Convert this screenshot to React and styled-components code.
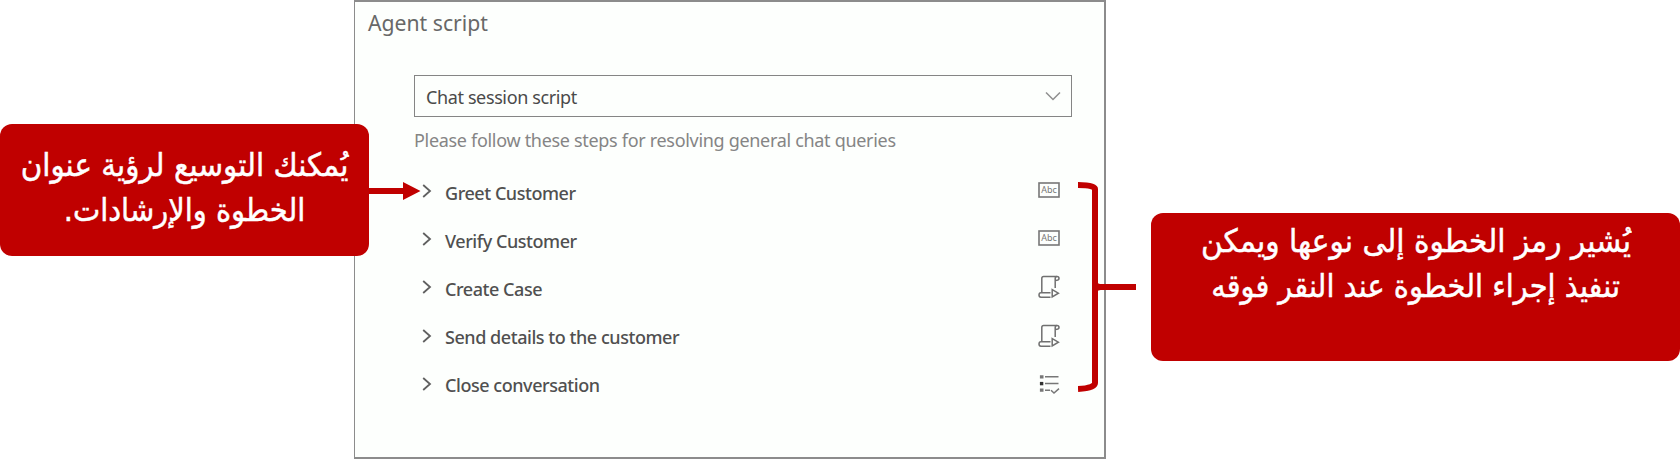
import React from "react";
import styled, { createGlobalStyle } from "styled-components";

const RED = "#c00000";

const GlobalStyle = createGlobalStyle`
  body { margin: 0; background: #fff; overflow: hidden; }
  * { box-sizing: border-box; }
`;

const Page = styled.main`
  position: relative;
  display: flex;
  align-items: flex-start;
  width: 1680px;
  height: 465px;
  background: #fff;
  font-family: "Noto Sans", "Open Sans", sans-serif;
`;

const Callout = styled.aside`
  position: relative;
  z-index: 2;
  flex: none;
  width: ${(p) => p.$width}px;
  height: ${(p) => p.$height}px;
  margin-top: ${(p) => p.$top}px;
  margin-left: ${(p) => p.$gap || 0}px;
  padding-top: ${(p) => p.$pad}px;
  border-radius: 12px;
  background: ${RED};
  color: #fff;
  direction: rtl;
  display: flex;
  flex-direction: column;
  align-items: center;
`;

const CalloutLine = styled.span`
  font-family: "DejaVu Sans", sans-serif;
  font-size: 32px;
  line-height: 45px;
  height: 45px;
  white-space: nowrap;
  -webkit-text-stroke: 0.5px #fff;
  transform: scaleX(${(p) => p.$stretch || 1});
`;

const Panel = styled.section`
  flex: none;
  width: 752px;
  height: 459px;
  margin-left: -15px;
  border: 2px solid #8c8c8c;
  border-left-width: 1.5px;
  background: #fdfffd;
  padding: 0 32px 0 59px;
`;

const Title = styled.h1`
  margin: 5px 0 0 -46px;
  font-size: 21.2px;
  line-height: 32px;
  font-weight: 400;
  color: #686868;
`;

const Select = styled.div`
  display: flex;
  align-items: center;
  justify-content: space-between;
  height: 42px;
  margin-top: 36px;
  padding: 1px 10px 0 11px;
  border: 1.5px solid #858585;
  color: #4a4a4a;
  font-size: 18px;
  letter-spacing: -0.38px;
`;

const Hint = styled.p`
  margin: 10px 0 0;
  font-size: 18px;
  line-height: 26px;
  letter-spacing: -0.31px;
  color: #858585;
  white-space: nowrap;
`;

const Steps = styled.ul`
  list-style: none;
  margin: 14px 0 0;
  padding: 0;
`;

const Step = styled.li`
  display: flex;
  align-items: center;
  height: 48.2px;
  padding: 0 12px 0 8px;
  color: #505050;
`;

const StepName = styled.span`
  flex: 1;
  margin-left: 13px;
  padding-top: 3px;
  font-size: 18px;
  line-height: 26px;
  font-weight: 500;
  letter-spacing: -0.45px;
`;

const Overlay = styled.svg`
  position: absolute;
  z-index: 3;
  left: ${(p) => p.$left}px;
  top: ${(p) => p.$top}px;
`;

const Chevron = () => (
  <svg width="10" height="14" viewBox="0 0 10 14" fill="none" stroke="#606060" strokeWidth="1.8">
    <path d="M1.2 1 L8 7 L1.2 13" />
  </svg>
);

const TextIcon = () => (
  <svg width="22" height="24" viewBox="0 0 22 24">
    <rect x="1" y="4" width="20" height="14" fill="none" stroke="#777" strokeWidth="1.6" />
    <text x="11" y="14.2" textAnchor="middle" fontSize="9" fontFamily="Noto Sans, sans-serif" fill="#777">Abc</text>
  </svg>
);

const MacroIcon = () => (
  <svg width="22" height="24" viewBox="0 0 22 24" fill="none" stroke="#707070" strokeWidth="1.5">
    <path d="M3.8 17.8 V3.4 Q3.8 1.6 5.6 1.6 H19" />
    <path d="M17.2 13 V3.4 Q17.2 1.6 19 1.6 Q21 1.6 21 3.6 Q21 5.6 17.2 5.6" />
    <path d="M12.5 17.8 H3 Q1 17.8 1 20 Q1 22.2 3 22.2 H12.5" />
    <path d="M14.2 14.6 L20.4 18.2 L14.2 22 Z" />
  </svg>
);

const ListIcon = () => (
  <svg width="22" height="24" viewBox="0 0 22 24" fill="none" stroke="#777" strokeWidth="1.5">
    <path d="M7 4.8 H20.5 M7 11.6 H20.5 M7 18.2 H12" />
    <path d="M13 18.2 L16 21 L21 16.6" />
    <path d="M1.9 4.8 H5.5 M1.9 18.2 H5.5" strokeWidth="3.2" />
    <path d="M1.9 11.6 H5.3" stroke="#333" strokeWidth="3.4" />
  </svg>
);

const steps = [
  ["Greet Customer", TextIcon],
  ["Verify Customer", TextIcon],
  ["Create Case", MacroIcon],
  ["Send details to the customer", MacroIcon],
  ["Close conversation", ListIcon],
];

export default function App() {
  return (
    <Page>
      <GlobalStyle />
      <Callout $width={369} $height={132} $top={124} $pad={19}>
        <CalloutLine $stretch={0.918}>يُمكنك التوسيع لرؤية عنوان</CalloutLine>
        <CalloutLine $stretch={0.905}>الخطوة والإرشادات.</CalloutLine>
      </Callout>

      <Panel>
        <Title>Agent script</Title>
        <Select>
          <span>Chat session script</span>
          <svg width="16" height="10" viewBox="0 0 16 10" fill="none" stroke="#909090" strokeWidth="1.5">
            <path d="M1 0.5 L8 7.5 L15 0.5" />
          </svg>
        </Select>
        <Hint>Please follow these steps for resolving general chat queries</Hint>
        <Steps>
          {steps.map(([name, Icon]) => (
            <Step key={name}>
              <Chevron />
              <StepName>{name}</StepName>
              <Icon />
            </Step>
          ))}
        </Steps>
      </Panel>

      <Callout $width={529} $height={148} $top={213} $pad={6} $gap={45}>
        <CalloutLine $stretch={0.927}>يُشير رمز الخطوة إلى نوعها ويمكن</CalloutLine>
        <CalloutLine $stretch={0.902}>تنفيذ إجراء الخطوة عند النقر فوقه</CalloutLine>
      </Callout>

      <Overlay $left={369} $top={181} width="52" height="20" viewBox="0 0 52 20">
        <path d="M0 7 H34 V1 L51.5 10 L34 19 V13 H0 Z" fill={RED} />
      </Overlay>
      <Overlay $left={1078} $top={181} width="60" height="213" viewBox="0 0 60 213" fill="none" stroke={RED} strokeWidth="6">
        <path d="M0 4 Q17 4 17 8 V202 Q17 207 0 208" />
        <path d="M17 106 H58" />
        <path d="M19 101.5 Q21 103.5 30 104 V108 Q21 108.5 19 110.5 Z" fill={RED} stroke="none" />
      </Overlay>
    </Page>
  );
}
